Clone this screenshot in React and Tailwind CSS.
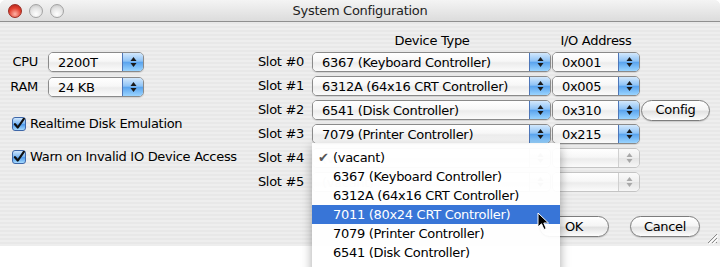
import React from 'react';

const font = { fontFamily: '"DejaVu Sans", "Liberation Sans", sans-serif' };

function Arrows({ dim }) {
  const c = dim ? '#a8a8a8' : '#1a1a1a';
  return (
    <svg width="7" height="12" viewBox="0 0 7 12">
      <path d="M3.5 1 L6.5 5 L0.5 5 Z" fill={c} />
      <path d="M3.5 11 L6.5 7 L0.5 7 Z" fill={c} />
    </svg>
  );
}

function Popup({ value, w, disabled }) {
  return (
    <div className={`flex h-[20px] ${w} rounded-[5px] border overflow-hidden ${disabled ? 'border-[#c4c4c4]' : 'border-[#8a8a8a] shadow-[0_1px_1px_rgba(0,0,0,0.12)]'}`}>
      <div className={`flex-1 flex items-center pl-[9px] text-[13px] leading-none bg-[linear-gradient(#ffffff,#f7f7f7_45%,#ececec_55%,#fbfbfb)] ${disabled ? 'text-[#c8c8c8]' : 'text-black'}`}>
        {value}
      </div>
      <div className={`w-[21px] flex items-center justify-center border-l ${disabled ? 'border-[#d0d0d0] bg-[linear-gradient(#fafafa,#eeeeee_50%,#e4e4e4_51%,#f6f6f6)]' : 'border-[#4d76b8] bg-[linear-gradient(#d3e8fc,#8ec3f6_45%,#5aa4ee_52%,#9ad4ff)]'}`}>
        <Arrows dim={disabled} />
      </div>
    </div>
  );
}

function Button({ children, w }) {
  return (
    <div className={`h-[21px] ${w} rounded-full border border-[#7d7d7d] bg-[linear-gradient(#ffffff,#f5f5f5_45%,#e2e2e2_55%,#fdfdfd)] shadow-[0_1px_1px_rgba(0,0,0,0.15)] flex items-center justify-center text-[13px] text-black`}>
      {children}
    </div>
  );
}

function Check({ label }) {
  return (
    <div className="flex items-center h-[18px]">
      <div className="w-[14px] h-[14px] rounded-[3px] border border-[#3f67a8] bg-[linear-gradient(#cfe6fc,#7fb9f3_45%,#4f9aea_55%,#a6dbff)] flex items-center justify-center">
        <svg width="12" height="12" viewBox="0 0 12 12">
          <path d="M2 6.2 L4.8 9.5 L10.8 0.8" fill="none" stroke="#101010" strokeWidth="2.2" strokeLinecap="round" strokeLinejoin="round" />
        </svg>
      </div>
      <span className="ml-[4px] text-[13px] text-black">{label}</span>
    </div>
  );
}

function Light({ red }) {
  return (
    <div
      className={`w-[14px] h-[14px] rounded-full border ${
        red
          ? 'border-[#9a2a20] bg-[radial-gradient(circle_at_50%_75%,#ffb3a6,#e2402f_55%,#a8201a)]'
          : 'border-[#a3a3a3] bg-[radial-gradient(circle_at_50%_75%,#ffffff,#e4e4e4_55%,#c0c0c0)]'
      }`}
    />
  );
}

const slots = [
  ['6367 (Keyboard Controller)', '0x001'],
  ['6312A (64x16 CRT Controller)', '0x005'],
  ['6541 (Disk Controller)', '0x310'],
  ['7079 (Printer Controller)', '0x215'],
  ['(vacant)', ''],
  ['(vacant)', ''],
];

const items = [
  '6367 (Keyboard Controller)',
  '6312A (64x16 CRT Controller)',
  '7011 (80x24 CRT Controller)',
  '7079 (Printer Controller)',
  '6541 (Disk Controller)',
];

export default function App() {
  return (
    <div className="relative w-[720px] h-[267px] bg-white overflow-hidden tracking-[-0.3px]" style={font}>
      {/* window */}
      <div className="relative w-[720px] h-[246px] rounded-t-[6px] overflow-hidden flex flex-col bg-[repeating-linear-gradient(180deg,#eeeeee_0px,#eeeeee_2px,#e8e8e8_2px,#e8e8e8_4px)]">
        <div className="h-[22px] shrink-0 flex items-center relative border-b border-[#8f8f8f] bg-[linear-gradient(#f4f4f4,#dcdcdc)]">
          <div className="flex gap-[7px] pl-[8px]">
            <Light red />
            <Light />
            <Light />
          </div>
          <div className="absolute inset-0 flex items-center justify-center text-[13px] text-[#1e1e1e]">
            System Configuration
          </div>
        </div>

        <div className="flex flex-1">
          {/* left column */}
          <div className="w-[250px] pt-[30px] flex flex-col">
            <div className="flex items-center h-[20px]">
              <span className="w-[38px] text-right text-[13px]">CPU</span>
              <div className="ml-[10px]"><Popup value="2200T" w="w-[96px]" /></div>
            </div>
            <div className="flex items-center h-[20px] mt-[5px]">
              <span className="w-[38px] text-right text-[13px]">RAM</span>
              <div className="ml-[10px]"><Popup value="24 KB" w="w-[96px]" /></div>
            </div>
            <div className="pl-[12px] mt-[18px]"><Check label="Realtime Disk Emulation" /></div>
            <div className="pl-[12px] mt-[15px]"><Check label="Warn on Invalid IO Device Access" /></div>
          </div>

          {/* slots */}
          <div className="pt-[8px] flex flex-col">
            <div className="flex h-[22px] items-center text-[13px]">
              <span className="w-[62px]" />
              <span className="w-[240px] text-center">Device Type</span>
              <span className="w-[88px] text-center">I/O Address</span>
            </div>
            <div className="flex flex-col gap-[4px]">
              {slots.map(([dev, io], i) => (
                <div key={i} className="flex items-center h-[20px]">
                  <span className="w-[54px] text-right text-[13px] mr-[8px]">Slot #{i}</span>
                  <Popup value={dev} w="w-[239px]" disabled={i > 3} />
                  <div className="ml-[1px]"><Popup value={io} w="w-[88px]" disabled={i > 3} /></div>
                  {i === 2 && <div className="ml-[1px]"><Button w="w-[69px]">Config</Button></div>}
                </div>
              ))}
            </div>
          </div>
        </div>

        <div className="flex justify-end gap-[21px] pr-[20px] pb-[9px]">
          <Button w="w-[70px]">OK</Button>
          <Button w="w-[70px]">Cancel</Button>
        </div>

        <svg className="absolute right-[2px] bottom-[2px]" width="12" height="12" viewBox="0 0 12 12">
          <path d="M11 2 L2 11 M11 6 L6 11 M11 10 L10 11" stroke="#8a8a8a" strokeWidth="1" />
          <path d="M12 3 L3 12 M12 7 L7 12" stroke="#ffffff" strokeWidth="1" />
        </svg>
      </div>

      {/* open popup menu */}
      <div className="absolute left-[312px] top-[143px] w-[248px] h-[130px] pt-[5px] bg-white/[0.93] shadow-[0_4px_10px_rgba(0,0,0,0.35)] text-[13px]">
        <div className="h-[19px] flex items-center pl-[6px] text-black">
          <span className="w-[15px] text-[#555] text-[13px]">✔</span>
          <span>(vacant)</span>
        </div>
        {items.map((t, i) => (
          <div key={t} className={`h-[19px] flex items-center pl-[21px] ${i === 2 ? 'bg-[#3875d7] text-white' : 'text-black'}`}>
            {t}
          </div>
        ))}
      </div>

      {/* mouse cursor */}
      <svg className="absolute left-[537px] top-[212px]" width="14" height="20" viewBox="0 0 14 20">
        <path d="M1 1 L1 15 L4.5 11.8 L7 17.5 L9.2 16.5 L6.8 11 L11.5 11 Z" fill="#000" stroke="#fff" strokeWidth="1" />
      </svg>
    </div>
  );
}
